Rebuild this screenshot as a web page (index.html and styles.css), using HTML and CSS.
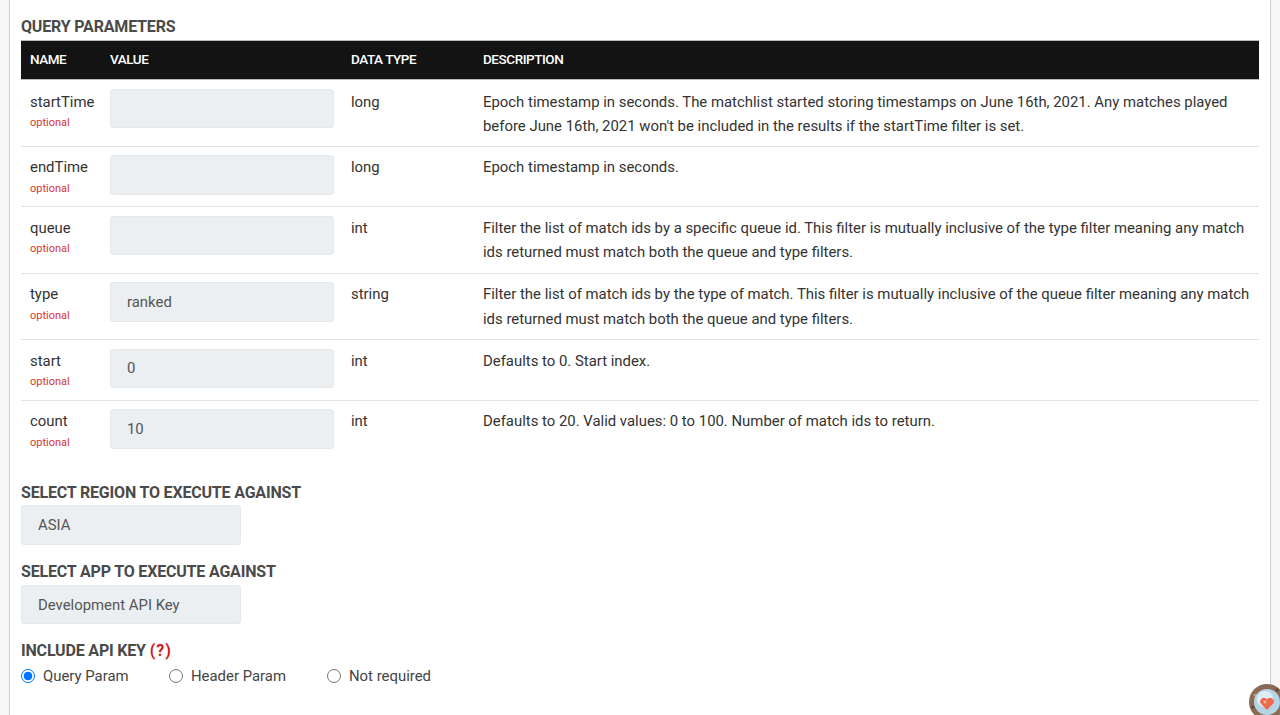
FILE: index.html
```html
<!DOCTYPE html>
<html lang="en">
<head>
<meta charset="utf-8">
<title>Query Parameters</title>
<link rel="stylesheet" href="styles.css">
</head>
<body>
<main class="panel">
  <h4 class="heading first">QUERY PARAMETERS</h4>
  <table class="params">
    <colgroup><col class="c-name"><col class="c-value"><col class="c-type"><col></colgroup>
    <thead>
      <tr><th>NAME</th><th>VALUE</th><th>DATA TYPE</th><th>DESCRIPTION</th></tr>
    </thead>
    <tbody>
      <tr>
        <td><div class="pname">startTime</div><div class="opt">optional</div></td>
        <td><div class="field"></div></td>
        <td>long</td>
        <td>Epoch timestamp in seconds. The matchlist started storing timestamps on June 16th, 2021. Any matches played before June 16th, 2021 won't be included in the results if the startTime filter is set.</td>
      </tr>
      <tr>
        <td><div class="pname">endTime</div><div class="opt">optional</div></td>
        <td><div class="field"></div></td>
        <td>long</td>
        <td>Epoch timestamp in seconds.</td>
      </tr>
      <tr>
        <td><div class="pname">queue</div><div class="opt">optional</div></td>
        <td><div class="field"></div></td>
        <td>int</td>
        <td>Filter the list of match ids by a specific queue id. This filter is mutually inclusive of the type filter meaning any match ids returned must match both the queue and type filters.</td>
      </tr>
      <tr>
        <td><div class="pname">type</div><div class="opt">optional</div></td>
        <td><div class="field">ranked</div></td>
        <td>string</td>
        <td>Filter the list of match ids by the type of match. This filter is mutually inclusive of the queue filter meaning any match ids returned must match both the queue and type filters.</td>
      </tr>
      <tr>
        <td><div class="pname">start</div><div class="opt">optional</div></td>
        <td><div class="field">0</div></td>
        <td>int</td>
        <td>Defaults to 0. Start index.</td>
      </tr>
      <tr class="last">
        <td><div class="pname">count</div><div class="opt">optional</div></td>
        <td><div class="field">10</div></td>
        <td>int</td>
        <td>Defaults to 20. Valid values: 0 to 100. Number of match ids to return.</td>
      </tr>
    </tbody>
  </table>
  <h4 class="heading region">SELECT REGION TO EXECUTE AGAINST</h4>
  <div class="field select">ASIA</div>
  <h4 class="heading app">SELECT APP TO EXECUTE AGAINST</h4>
  <div class="field select">Development API Key</div>
  <h4 class="heading key">INCLUDE API KEY <span class="help">(?)</span></h4>
  <div class="radios">
    <label class="radio r1"><span class="dot on"></span>Query Param</label>
    <label class="radio r2"><span class="dot"></span>Header Param</label>
    <label class="radio"><span class="dot"></span>Not required</label>
  </div>
</main>
<div class="avatar">
  <svg viewBox="0 0 36 36" width="36" height="36" aria-hidden="true">
    <circle cx="18" cy="18" r="18" fill="#8a6a52"/>
    <circle cx="6" cy="11" r="1.6" fill="#b89a80"/>
    <circle cx="28" cy="6" r="1.6" fill="#5f4534"/>
    <circle cx="4" cy="23" r="1.6" fill="#5f4534"/>
    <circle cx="12" cy="32" r="1.6" fill="#b89a80"/>
    <circle cx="18" cy="18" r="13" fill="#b7d4e6"/>
    <circle cx="16" cy="15" r="8" fill="#dfeef6"/>
    <path d="M18 26l-6-6.2a3.7 3.7 0 0 1 5.2-5.2l.8.8.8-.8a3.7 3.7 0 0 1 5.2 5.2z" fill="#ef6a4c"/>
    <circle cx="16" cy="18" r="1.4" fill="#f9b6a0"/>
  </svg>
</div>
</body>
</html>
```
FILE: styles.css
```css
* { box-sizing: border-box; }
html, body { height: 100%; }
body {
  margin: 0;
  height: 715px;
  overflow: hidden;
  background: #f6f6f6;
  font-family: "Roboto", "Liberation Sans", sans-serif;
  font-size: 14.9px;
  color: #333;
}
.panel {
  margin: 0 9px 0 9px;
  height: 715px;
  padding: 17px 11px 0 11px;
  background: #fff;
  border-left: 1px solid #ccc;
  border-right: 1px solid #ccc;
}
.heading {
  margin: 0;
  font-size: 16px;
  line-height: 20px;
  font-weight: 700;
  color: #4a4a4a;
  letter-spacing: -0.18px;
}
.first { height: 23px; }
.region { margin-top: 23px; height: 22px; }
.app { margin-top: 17px; height: 23px; }
.key { margin-top: 17px; height: 25px; }
.help { color: #d0191f; letter-spacing: 1px; }
.params {
  width: 1238px;
  table-layout: fixed;
  border-collapse: collapse;
}
.c-name { width: 80px; }
.c-value { width: 241px; }
.c-type { width: 132px; }
.params th {
  height: 39px;
  padding: 0 9px 2px;
  background: #131313;
  border-top: 1px solid #bbb;
  border-bottom: 1px solid #bbb;
  color: #fff;
  font-size: 13.5px;
  font-weight: 500;
  letter-spacing: -0.45px;
  text-align: left;
}
.params td {
  padding: 8.5px 4px 7.5px 9px;
  vertical-align: top;
  border-bottom: 1px solid #e2e2e2;
  line-height: 24.75px;
}
.params tbody tr:first-child td {
  padding-top: 9.5px;
  padding-bottom: 6.5px;
}
.params tbody tr:first-child .field { margin-top: -1px; }
.params .last td { border-bottom: 0; }
.pname { line-height: 24.75px; }
.opt {
  color: #d9362f;
  font-size: 11px;
  line-height: 18.75px;
}
.field {
  display: flex;
  align-items: center;
  height: 39.5px;
  padding: 1px 16px 0;
  background: #eceff2;
  border: 1px solid #e6e9ec;
  border-radius: 3px;
  color: #555;
  font-size: 14.9px;
}
.params .field { width: 224px; }
.select { width: 220px; }
.radios { display: flex; align-items: center; height: 20px; }
.radio { display: flex; align-items: center; gap: 8px; color: #444; font-size: 14.9px; }
.r1 { width: 148px; }
.r2 { width: 158px; }
.dot {
  width: 14px;
  height: 14px;
  border-radius: 50%;
  border: 1px solid #767676;
  background: #fff;
}
.dot.on {
  border: 1.5px solid #0075ff;
  background: radial-gradient(circle, #0075ff 0 4px, #fff 4.6px);
}
.avatar {
  position: absolute;
  left: 1249px;
  top: 684px;
  width: 36px;
  height: 36px;
}
```
